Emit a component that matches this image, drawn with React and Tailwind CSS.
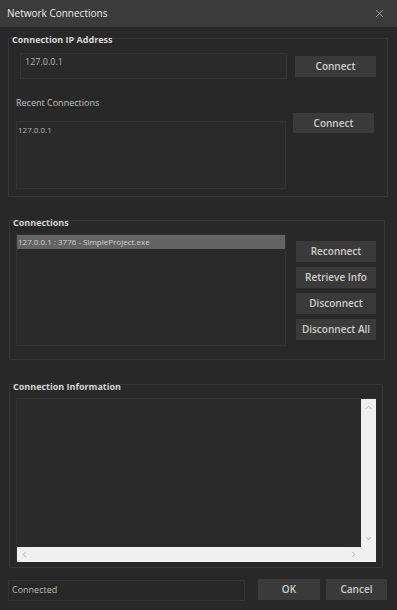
import { X } from 'lucide-react'

function Btn({ children, className = '' }) {
  return (
    <div
      className={`flex items-center justify-center bg-[#3a3a3a] text-[10px] font-semibold text-[#cdcdcd] ${className}`}
    >
      {children}
    </div>
  )
}

function Group({ title, className = '', labelClass = '-mt-[4px]', children }) {
  return (
    <div className={`border border-[#363636] ${className}`}>
      <div className={`px-[3px] text-[9px] font-bold leading-[12px] text-[#d6d6d6] ${labelClass}`}>{title}</div>
      {children}
    </div>
  )
}

function Arrow({ d }) {
  return (
    <svg width="7" height="7" viewBox="0 0 8 8" className="text-[#a8a8a8]">
      <path d={d} fill="none" stroke="currentColor" strokeWidth="1" />
    </svg>
  )
}

export default function App() {
  return (
    <div className="flex h-[610px] w-[397px] flex-col overflow-hidden bg-[#282828] font-['Open_Sans',sans-serif]">
      {/* title bar */}
      <div className="flex h-[27px] items-center justify-between bg-[#3b3b3b] pl-[7px] pr-[11px]">
        <span className="text-[10px] text-[#ececec]">Network Connections</span>
        <X size={13} strokeWidth={1.2} className="text-[#cfcfcf]" />
      </div>

      <div className="flex flex-col px-[8px] pt-[11px]">
        {/* Connection IP Address */}
        <Group title="Connection IP Address" labelClass="-mt-[5px]" className="h-[159px] w-[380px]">
          <div className="mt-[7px] flex items-start">
            <div className="ml-[11px] h-[26px] w-[267px] border border-[#333333] bg-[#2a2a2a] pl-[4px] pt-[1px] text-[9px] text-[#b4b4b4]">
              127.0.0.1
            </div>
            <Btn className="ml-[8px] mt-[3px] h-[21px] w-[81px]">Connect</Btn>
          </div>
          <div className="ml-[7px] mt-[18px] text-[9px] leading-[12px] text-[#c4c4c4]">Recent Connections</div>
          <div className="flex items-start">
            <div className="ml-[7px] mt-[12px] h-[68px] w-[270px] border border-[#333333] bg-[#2a2a2a] pl-[1px] pt-[2px] text-[8px] text-[#b4b4b4]">
              127.0.0.1
            </div>
            <Btn className="ml-[7px] mt-[4px] h-[20px] w-[81px]">Connect</Btn>
          </div>
        </Group>

        {/* Connections */}
        <Group title="Connections" className="ml-[1px] mt-[23px] h-[140px] w-[376px]">
          <div className="flex items-start">
            <div className="ml-[6px] mt-[5px] h-[112px] w-[270px] border border-[#333333] bg-[#2a2a2a]">
              <div className="flex h-[14px] items-center bg-[#636363] pl-[1px] text-[8px] text-[#d0d0d0]">
                127.0.0.1 : 3776 - SimpleProject.exe
              </div>
            </div>
            <div className="ml-[10px] mt-[12px] flex flex-col gap-[5px]">
              <Btn className="h-[21px] w-[80px]">Reconnect</Btn>
              <Btn className="h-[21px] w-[80px]">Retrieve Info</Btn>
              <Btn className="h-[21px] w-[80px]">Disconnect</Btn>
              <Btn className="h-[21px] w-[80px]">Disconnect All</Btn>
            </div>
          </div>
        </Group>

        {/* Connection Information */}
        <Group title="Connection Information" className="ml-[1px] mt-[24px] h-[184px] w-[374px]">
          <div className="ml-[6px] mt-[5px] grid h-[164px] w-[360px] grid-cols-[1fr_15px] grid-rows-[1fr_15px] border-t border-l border-[#333333]">
            <div className="bg-[#2a2a2a]" />
            <div className="flex flex-col items-center justify-between bg-[#f0f0f0] py-[5px]">
              <Arrow d="M1 5.5 L4 2.5 L7 5.5" />
              <Arrow d="M1 2.5 L4 5.5 L7 2.5" />
            </div>
            <div className="flex items-center justify-between bg-[#f0f0f0] px-[4px]">
              <Arrow d="M5.5 1 L2.5 4 L5.5 7" />
              <Arrow d="M2.5 1 L5.5 4 L2.5 7" />
            </div>
            <div className="bg-[#f0f0f0]" />
          </div>
        </Group>

        {/* footer */}
        <div className="mt-[11px] flex items-start">
          <div className="mt-[1px] h-[21px] w-[237px] border border-[#333333] bg-[#282828] pl-[3px] pt-[2px] text-[9px] text-[#bcbcbc]">
            Connected
          </div>
          <Btn className="ml-[13px] h-[21px] w-[62px]">OK</Btn>
          <Btn className="ml-[6px] h-[21px] w-[61px]">Cancel</Btn>
        </div>
      </div>
    </div>
  )
}
